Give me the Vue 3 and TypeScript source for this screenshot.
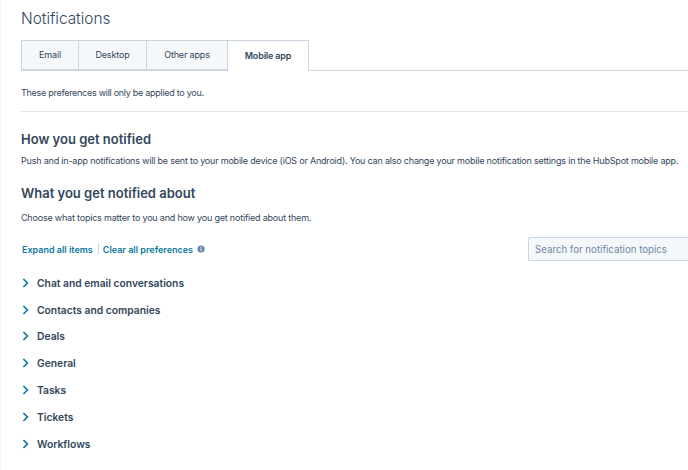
<script setup lang="ts">
const tabs: string[] = ['Email', 'Desktop', 'Other apps'];
const topics: string[] = ['Chat and email conversations', 'Contacts and companies', 'Deals', 'General', 'Tasks', 'Tickets', 'Workflows'];
</script>

<template>
  <main class="page">
    <h1 class="title">Notifications</h1>
    <nav class="tabs">
      <div v-for="t in tabs" :key="t" class="tab">{{ t }}</div>
      <div class="tab active">Mobile app</div>
    </nav>
    <p class="note">These preferences will only be applied to you.</p>
    <hr class="rule" />
    <h2 class="h first">How you get notified</h2>
    <p class="para">Push and in-app notifications will be sent to your mobile device (iOS or Android). You can also change your mobile notification settings in the HubSpot mobile app.</p>
    <h2 class="h second">What you get notified about</h2>
    <p class="para sub">Choose what topics matter to you and how you get notified about them.</p>
    <div class="tools">
      <div class="links">
        <a class="link">Expand all items</a>
        <span class="sep"></span>
        <a class="link">Clear all preferences</a>
        <svg class="info" width="8" height="8" viewBox="0 0 8 8"><circle cx="4" cy="4" r="3.6" fill="#6a86ad"/><rect x="3.5" y="3.4" width="1" height="2.6" fill="#fff"/><rect x="3.5" y="1.9" width="1" height="1" fill="#fff"/></svg>
      </div>
      <div class="search">Search for notification topics</div>
    </div>
    <ul class="list">
      <li v-for="t in topics" :key="t" class="row">
        <svg class="chev" width="7" height="10" viewBox="0 0 7 10"><path d="M1.4 1 L5.4 5 L1.4 9" fill="none" stroke="#0b7a9b" stroke-width="1.7"/></svg>
        <span>{{ t }}</span>
      </li>
    </ul>
  </main>
</template>

<style>
html, body { background: #fff; overflow: hidden; }
</style>

<style scoped>
.page {
  width: 688px;
  height: 470px;
  box-sizing: border-box;
  overflow: hidden;
  font-family: Inter, "Noto Sans", sans-serif;
  color: #33475b;
  border-left: 1px solid #f5f7fa;
  padding-left: 20px;
}
.title { margin: 0; padding-top: 9px; font-size: 15.4px; line-height: 20px; font-weight: 300; height: 22px; }
.tabs { display: flex; box-sizing: border-box; height: 31px; border-bottom: 1px solid #cbd6e2; margin-top: 9px; }
.tab {
  box-sizing: border-box; height: 30px; padding-bottom: 1px; display: flex; align-items: center; justify-content: center;
  font-size: 9px; letter-spacing: -0.15px; background: #f5f8fa; border: 1px solid #cbd6e2; border-left-width: 0; color: #33475b;
}
.tab:nth-child(1) { width: 58px; border-left-width: 1px; }
.tab:nth-child(2) { width: 68px; }
.tab:nth-child(3) { width: 81px; }
.tab.active { width: 81px; height: 31px; padding-bottom: 2px; background: #fff; border-bottom: 0; font-weight: 600; }
.note { margin: 16px 0 0; font-size: 9px; line-height: 12px; letter-spacing: -0.28px; }
.rule { margin: 12px 0 0; border: 0; border-top: 1px solid #dfe3eb; }
.h { margin: 0; font-size: 13px; line-height: 16px; font-weight: 600; }
.first { margin-top: 19px; }
.second { margin-top: 18px; }
.para { margin: 8px 0 0; font-size: 9px; line-height: 12px; letter-spacing: -0.2px; white-space: nowrap; }
.para.sub { margin-top: 11px; }
.tools { display: flex; justify-content: space-between; align-items: center; margin-top: 13px; height: 24px; }
.links { display: flex; align-items: center; padding-left: 1px; }
.link { font-size: 9px; font-weight: 600; color: #0b7a9b; }
.sep { width: 1px; height: 10px; background: #cbd6e2; margin: 0 4px 0 5px; }
.info { margin-left: 4px; }
.search {
  box-sizing: border-box; width: 160px; height: 24px; padding: 1px 0 0 6px; display: flex; align-items: center;
  font-size: 9.7px; color: #6f86a6; background: #f5f8fa; border: 1px solid #cbd6e2; border-right: 0; border-radius: 2px 0 0 2px;
}
.list { list-style: none; margin: 8.4px 0 0; padding: 0; }
.row { display: flex; align-items: center; height: 26.83px; font-size: 10.3px; font-weight: 600; }
.chev { margin: 0 8px 0 1px; }
</style>
